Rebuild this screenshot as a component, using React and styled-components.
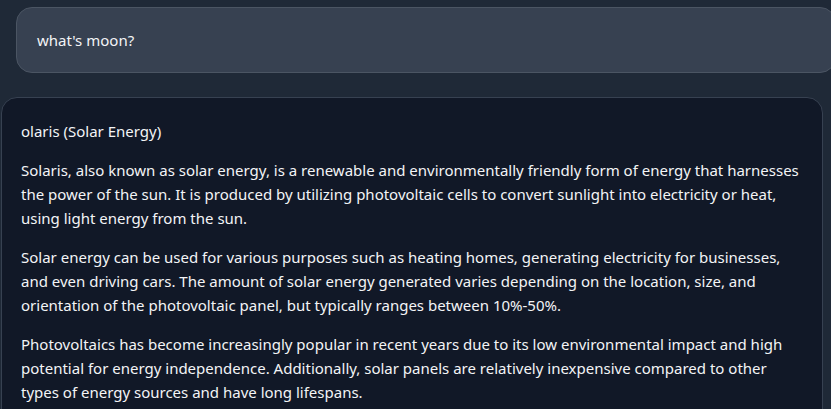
import React from "react";
import styled, { createGlobalStyle } from "styled-components";

const GlobalStyle = createGlobalStyle`
  html, body {
    margin: 0;
    padding: 0;
    background: #1f2937;
    overflow: hidden;
  }
  body {
    font-family: "Noto Sans", sans-serif;
    color: #f3f4f6;
  }
`;

const Page = styled.div`
  width: 831px;
  height: 409px;
  overflow: hidden;
  display: flex;
  flex-direction: column;
  gap: 24px;
  padding-top: 7px;
  box-sizing: border-box;
`;

// chat bubble: user question / assistant answer
const Bubble = styled.div`
  margin-left: ${(p) => p.offset}px;
  width: ${(p) => p.width}px;
  flex-shrink: 0;
  box-sizing: border-box;
  border: 1px solid ${(p) => p.border};
  background: ${(p) => p.bg};
  border-radius: 16px;
  padding: ${(p) => p.pad};
  font-size: 15px;
  line-height: 24px;
`;

const Para = styled.p`
  margin: 0 0 15px 0;
  &:last-child {
    margin-bottom: 0;
  }
`;

const paragraphs = [
  "olaris (Solar Energy)",
  "Solaris, also known as solar energy, is a renewable and environmentally friendly form of energy that harnesses the power of the sun. It is produced by utilizing photovoltaic cells to convert sunlight into electricity or heat, using light energy from the sun.",
  "Solar energy can be used for various purposes such as heating homes, generating electricity for businesses, and even driving cars. The amount of solar energy generated varies depending on the location, size, and orientation of the photovoltaic panel, but typically ranges between 10%-50%.",
  "Photovoltaics has become increasingly popular in recent years due to its low environmental impact and high potential for energy independence. Additionally, solar panels are relatively inexpensive compared to other types of energy sources and have long lifespans.",
];

export default function App() {
  return (
    <>
      <GlobalStyle />
      <Page>
        <Bubble offset={16} width={820} bg="#374151" border="#4b5563" pad="20px 20px">
          what's moon?
        </Bubble>
        <Bubble offset={1} width={822} bg="#111827" border="#374151" pad="21px 19px">
          {paragraphs.map((t, i) => (
            <Para key={i}>{t}</Para>
          ))}
        </Bubble>
      </Page>
    </>
  );
}
